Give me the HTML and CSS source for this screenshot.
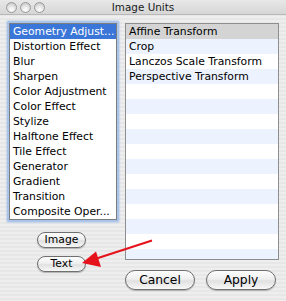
FILE: index.html
```html
<!DOCTYPE html>
<html lang="en">
<head>
  <meta charset="UTF-8" />
  <title>Image Units</title>
  <link rel="stylesheet" href="styles.css">
</head>
<body>
  <div class="window">
    <div class="titlebar">
      <div class="lights">
        <span class="light"></span>
        <span class="light"></span>
        <span class="light"></span>
      </div>
      <div class="title">Image Units</div>
      <div></div>
    </div>

    <div class="content">
      <div class="left-col">
        <ul class="category-list">
          <li class="selected">Geometry Adjust...</li>
          <li>Distortion Effect</li>
          <li>Blur</li>
          <li>Sharpen</li>
          <li>Color Adjustment</li>
          <li>Color Effect</li>
          <li>Stylize</li>
          <li>Halftone Effect</li>
          <li>Tile Effect</li>
          <li>Generator</li>
          <li>Gradient</li>
          <li>Transition</li>
          <li>Composite Oper...</li>
        </ul>
        <button class="aqua small first">Image</button>
        <button class="aqua small">Text</button>
      </div>

      <div class="right-col">
        <ul class="unit-table">
          <li class="selected">Affine Transform</li>
          <li>Crop</li>
          <li>Lanczos Scale Transform</li>
          <li>Perspective Transform</li>
        </ul>
        <div class="actions">
          <button class="aqua regular">Cancel</button>
          <button class="aqua regular">Apply</button>
        </div>
      </div>
    </div>

    <svg class="annotation" width="286" height="301" viewBox="0 0 286 301">
      <line x1="152" y1="240.5" x2="95" y2="259" stroke="#e5121c" stroke-width="2"/>
      <polygon points="82,263 96,251.5 101,267" fill="#e5121c"/>
    </svg>
  </div>
</body>
</html>
```

FILE: styles.css
```css
* {
  box-sizing: border-box;
}

body {
  margin: 0;
  font-family: "DejaVu Sans", "Liberation Sans", sans-serif;
  color: #000;
}

.window {
  position: relative;
  width: 286px;
  height: 301px;
  overflow: hidden;
  background: repeating-linear-gradient(#eeeeee 0 2px, #e7e7e7 2px 4px);
}

/* title bar */
.titlebar {
  display: grid;
  grid-template-columns: 1fr auto 1fr;
  align-items: center;
  height: 15px;
  background: linear-gradient(#e8e8e8, #d6d6d6);
  border-bottom: 1px solid #b8b8b8;
}

.lights {
  display: flex;
  gap: 3px;
  padding-left: 6px;
}

.light {
  width: 11px;
  height: 11px;
  border-radius: 50%;
  border: 1px solid #9a9a9a;
  background: radial-gradient(circle at 50% 75%, #ffffff 0, #e6e6e6 45%, #bdbdbd 100%);
}

.title {
  font-size: 10.4px;
  line-height: 15px;
  color: #1a1a1a;
}

/* main area */
.content {
  display: flex;
  gap: 8px;
  padding: 8px 7px 0 9px;
}

.left-col {
  width: 108px;
  display: flex;
  flex-direction: column;
  align-items: center;
}

.category-list {
  list-style: none;
  margin: 0;
  padding: 0;
  width: 108px;
  height: 197px;
  background: #fff;
  border: 1px solid #7d7d7d;
  box-shadow: 0 0 0 1px #a9c4ea, 0 0 2px 2px #8fb2e6;
  font-size: 10.8px;
}

.category-list li {
  height: 15px;
  line-height: 15px;
  padding-left: 3px;
  white-space: nowrap;
}

.category-list li.selected {
  background: #3a76d8;
  color: #fff;
}

.right-col {
  width: 154px;
  display: flex;
  flex-direction: column;
}

.unit-table {
  list-style: none;
  margin: 0;
  padding: 0;
  height: 237px;
  border: 1px solid #8e8e8e;
  background: repeating-linear-gradient(#fff 0 15px, #edf3fe 15px 30px);
  font-size: 10.8px;
}

.unit-table li {
  height: 15px;
  line-height: 15px;
  padding-left: 3px;
  white-space: nowrap;
}

.unit-table li.selected {
  background: #d4d4d4;
}

/* aqua buttons */
.aqua {
  font-family: inherit;
  color: #000;
  padding: 0;
  border: 1px solid #6f6f6f;
  background: linear-gradient(#fdfdfd 0, #efefef 45%, #e0e0e0 55%, #f8f8f8 100%);
  box-shadow: 0 1px 1px rgba(0, 0, 0, 0.25);
}

.small {
  width: 49px;
  height: 16px;
  border-radius: 8px;
  font-size: 10.8px;
  line-height: 14px;
  margin-right: 3px;
  margin-top: 8px;
}

.small.first {
  margin-top: 12px;
}

.actions {
  display: flex;
  gap: 11px;
  margin-top: 10px;
}

.regular {
  width: 70px;
  height: 20px;
  border-radius: 10px;
  font-size: 12.3px;
  line-height: 18px;
}

.annotation {
  position: absolute;
  left: 0;
  top: 0;
  pointer-events: none;
}
```
